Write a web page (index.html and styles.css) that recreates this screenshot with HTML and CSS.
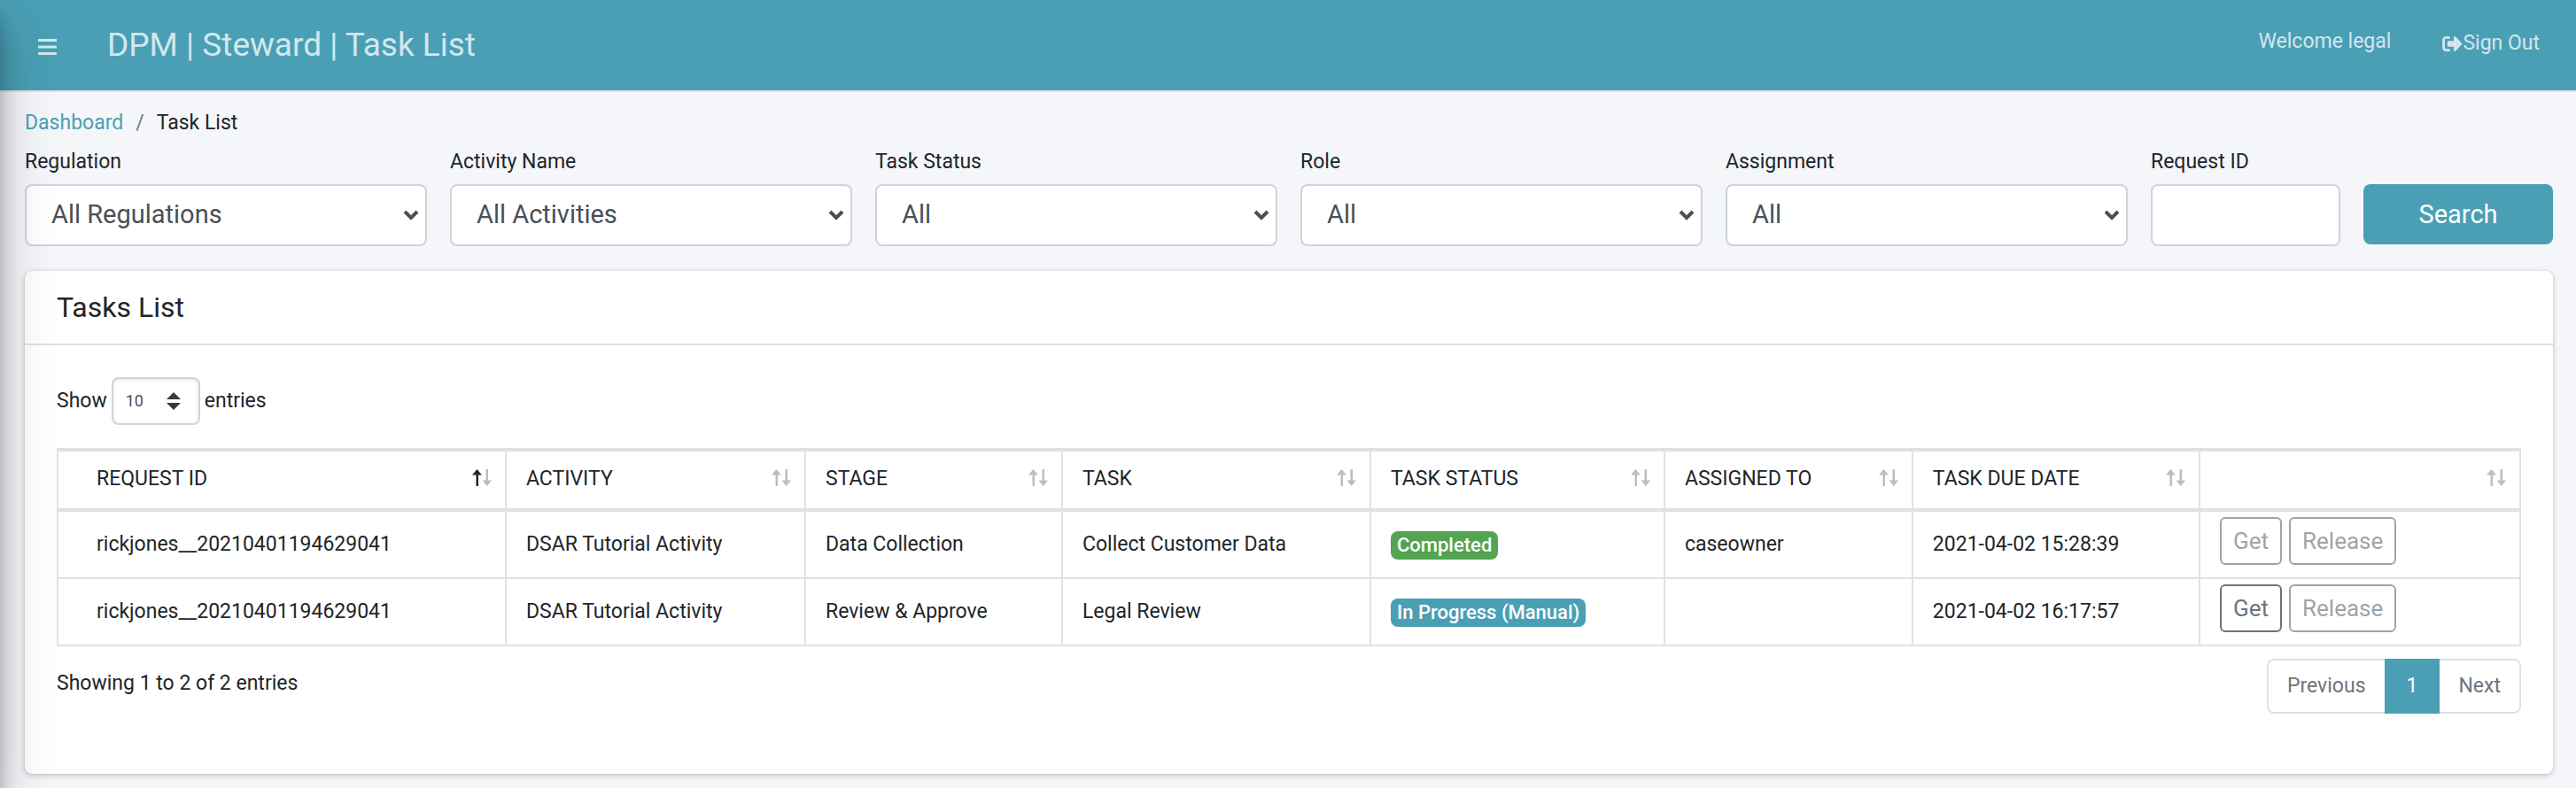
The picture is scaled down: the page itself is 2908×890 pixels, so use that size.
FILE: index.html
```html
<!DOCTYPE html>
<html lang="en">
<head>
<meta charset="utf-8">
<title>DPM | Steward | Task List</title>
<link rel="stylesheet" href="styles.css">
</head>
<body>
<svg class="defs" aria-hidden="true">
  <symbol id="sort" viewBox="0 0 22 20">
    <path class="up" d="M5.500 0L11 6.500H7V19H4.500V6.500H0Z"/>
    <path class="down" d="M15.500 0H18V12.500H22L16.750 19L11.500 12.500H15.500Z"/>
  </symbol>
</svg>
<aside class="sidebar" aria-hidden="true"></aside>
<header class="topbar">
  <button class="menu" type="button" aria-label="Toggle menu">
    <svg viewBox="0 0 21 18" width="21" height="18"><path d="M0 0H21V3H0ZM0 7.500H21V10.500H0ZM0 15H21V18H0Z"/></svg>
  </button>
  <h1 class="brand">DPM | Steward | Task List</h1>
  <span class="welcome">Welcome legal</span>
  <a class="signout" href="#"><svg viewBox="0 0 512 384" width="23" height="17"><path d="M497 209L329 377c-15 15-41 4.500-41-17v-96H152c-13.300 0-24-10.700-24-24v-96c0-13.300 10.700-24 24-24h136V24c0-21.400 25.900-32 41-17l168 168c9.300 9.400 9.300 24.600 0 34zM192 372v-40c0-6.600-5.400-12-12-12H96c-17.700 0-32-14.300-32-32V96c0-17.700 14.300-32 32-32h84c6.600 0 12-5.400 12-12V12c0-6.600-5.400-12-12-12H96C43 0 0 43 0 96v192c0 53 43 96 96 96h84c6.600 0 12-5.400 12-12z"/></svg>Sign Out</a>
</header>
<main class="content">
  <nav class="breadcrumb" aria-label="Breadcrumb">
    <a href="#">Dashboard</a><span class="slash">/</span><span>Task List</span>
  </nav>
  <form class="filters">
    <div class="field"><label for="regulation">Regulation</label><select id="regulation" class="control"><option>All Regulations</option></select></div>
    <div class="field"><label for="activity">Activity Name</label><select id="activity" class="control"><option>All Activities</option></select></div>
    <div class="field"><label for="status">Task Status</label><select id="status" class="control"><option>All</option></select></div>
    <div class="field"><label for="role">Role</label><select id="role" class="control"><option>All</option></select></div>
    <div class="field"><label for="assignment">Assignment</label><select id="assignment" class="control"><option>All</option></select></div>
    <div class="field narrow"><label for="request">Request ID</label><input id="request" class="control" type="text"></div>
    <button class="search" type="button">Search</button>
  </form>
  <section class="card">
    <h2 class="card-title">Tasks List</h2>
    <div class="card-body">
      <label class="length" for="length"><span>Show</span><select id="length"><option>10</option></select><span>entries</span></label>
      <table class="tasks">
        <colgroup>
          <col class="c-request"><col class="c-activity"><col class="c-stage"><col class="c-task"><col class="c-status"><col class="c-assigned"><col class="c-due"><col class="c-actions">
        </colgroup>
        <thead>
          <tr>
            <th><div class="head"><span>REQUEST ID</span><svg class="sort asc"><use href="#sort"/></svg></div></th>
            <th><div class="head"><span>ACTIVITY</span><svg class="sort"><use href="#sort"/></svg></div></th>
            <th><div class="head"><span>STAGE</span><svg class="sort"><use href="#sort"/></svg></div></th>
            <th><div class="head"><span>TASK</span><svg class="sort"><use href="#sort"/></svg></div></th>
            <th><div class="head"><span>TASK STATUS</span><svg class="sort"><use href="#sort"/></svg></div></th>
            <th><div class="head"><span>ASSIGNED TO</span><svg class="sort"><use href="#sort"/></svg></div></th>
            <th><div class="head"><span>TASK DUE DATE</span><svg class="sort"><use href="#sort"/></svg></div></th>
            <th><div class="head"><span></span><svg class="sort"><use href="#sort"/></svg></div></th>
          </tr>
        </thead>
        <tbody>
          <tr>
            <td>rickjones__20210401194629041</td><td>DSAR Tutorial Activity</td><td>Data Collection</td><td>Collect Customer Data</td>
            <td><span class="badge done">Completed</span></td><td>caseowner</td><td>2021-04-02 15:28:39</td>
            <td class="actions"><div class="buttons"><button type="button" disabled>Get</button><button type="button" disabled>Release</button></div></td>
          </tr>
          <tr>
            <td>rickjones__20210401194629041</td><td>DSAR Tutorial Activity</td><td>Review &amp; Approve</td><td>Legal Review</td>
            <td><span class="badge progress">In Progress (Manual)</span></td><td></td><td>2021-04-02 16:17:57</td>
            <td class="actions"><div class="buttons"><button type="button">Get</button><button type="button" disabled>Release</button></div></td>
          </tr>
        </tbody>
      </table>
      <div class="table-foot">
        <p class="info">Showing 1 to 2 of 2 entries</p>
        <nav class="pages" aria-label="Pages"><a href="#">Previous</a><a class="current" href="#" aria-current="page">1</a><a href="#">Next</a></nav>
      </div>
    </div>
  </section>
</main>
</body>
</html>
```

FILE: styles.css
```css
* { box-sizing: border-box; }

body {
  margin: 0;
  min-height: 100vh;
  background: #f4f6fa;
  color: #212529;
  font: 400 23px/34px Roboto, "Liberation Sans", sans-serif;
}

h1, h2, p { margin: 0; font-weight: 400; }
a { color: #4a9fb5; text-decoration: none; }
button, select, input { font: inherit; }
.defs { display: none; }

/* Collapsed off-canvas menu; only its shadow reaches the page. */
.sidebar {
  position: fixed;
  top: 0;
  bottom: 0;
  left: -500px;
  width: 500px;
  z-index: 5;
  box-shadow: 0 28px 56px rgba(0, 0, 0, .25), 0 20px 20px rgba(0, 0, 0, .22);
  pointer-events: none;
}

.topbar {
  display: flex;
  align-items: center;
  height: 104px;
  padding: 0 41px 0 43px;
  background: #4a9fb5;
  border-bottom: 2px solid #dee2e6;
  color: #d2e7ed;
}
.topbar svg { display: block; fill: currentColor; }
.menu { padding: 4px 0 0; border: 0; background: none; color: inherit; }
.brand { margin-left: 57px; font-size: 37px; line-height: 52px; }
.welcome { margin: 0 58px 8px auto; }
.signout { display: flex; align-items: center; margin-bottom: 4px; color: inherit; }

.content { padding: 18px 26px 16px 28px; }

.breadcrumb { display: flex; gap: 14px; margin-bottom: 10px; }
.slash { color: #6c757d; }

.filters {
  display: grid;
  grid-template-columns: repeat(12, 1fr);
  column-gap: 26px;
  margin-bottom: 28px;
}
.field { grid-column: span 2; display: flex; flex-direction: column; gap: 8px; min-width: 0; }
.narrow { grid-column: span 1; }
.control {
  width: 100%;
  height: 70px;
  padding: 0 28px 2px;
  border: 2px solid #ced4da;
  border-radius: 8px;
  background: #fff;
  color: #495057;
  font-size: 29px;
}
select.control {
  appearance: none;
  background: #fff url("data:image/svg+xml,%3Csvg xmlns='http://www.w3.org/2000/svg' viewBox='0 0 18 12'%3E%3Cpath d='M2 2l7 7 7-7' fill='none' stroke='%23495057' stroke-width='4'/%3E%3C/svg%3E") no-repeat right 7px center / 18px 12px;
}
.search {
  align-self: end;
  height: 68px;
  margin-bottom: 2px;
  border: 0;
  border-radius: 8px;
  background: #4a9fb5;
  color: #fff;
  font-size: 29px;
}

.card {
  border-radius: 8px;
  background: #fff;
  box-shadow: 0 0 2px rgba(0, 0, 0, .13), 0 2px 6px rgba(0, 0, 0, .2);
}
.card-title {
  padding: 24px 36px;
  border-bottom: 2px solid #dfdfdf;
  font-size: 32px;
  line-height: 34px;
}
.card-body { padding: 36px; }

.length { display: inline-flex; align-items: center; gap: 5px; margin-bottom: 26px; vertical-align: top; }
.length select {
  appearance: none;
  width: 100px;
  height: 54px;
  padding: 0 14px;
  border: 2px solid #ced4da;
  border-radius: 8px;
  background: #fff url("data:image/svg+xml,%3Csvg xmlns='http://www.w3.org/2000/svg' viewBox='0 0 4 5'%3E%3Cpath fill='%23343a40' d='M2 0L0 2h4zm0 5L0 3h4z'/%3E%3C/svg%3E") no-repeat right 20px center / 16px 20px;
  box-shadow: inset 0 2px 4px rgba(0, 0, 0, .08);
  color: #495057;
  font-size: 18px;
}

.tasks { width: 100%; border-collapse: collapse; table-layout: fixed; }
.c-request { width: 18.2%; }
.c-activity { width: 12.16%; }
.c-stage { width: 10.43%; }
.c-task { width: 12.52%; }
.c-status { width: 11.94%; }
.c-assigned { width: 10.07%; }
.c-due { width: 11.66%; }
.c-actions { width: 13.02%; }

.tasks th, .tasks td { border: 2px solid #dee2e6; text-align: left; font-weight: 400; white-space: nowrap; }
.tasks th { padding: 14px 15px 16px 22px; border-top-width: 4px; border-bottom-width: 4px; }
.tasks td { padding: 6px 22px; }
.tasks th:first-child, .tasks td:first-child { padding-left: 43px; }
.tasks .actions { padding: 6px 22px 14px; }

.head { display: flex; align-items: center; justify-content: space-between; }
.sort { width: 22px; height: 20px; margin-bottom: 2px; }
.up { fill: var(--up, #bcbdbe); }
.down { fill: #bcbdbe; }
.asc { --up: #212529; }

.badge {
  display: inline-block;
  padding: 0 7px;
  border-radius: 8px;
  color: #fff;
  font-size: 22px;
  font-weight: 500;
  line-height: 32px;
  vertical-align: middle;
}
.done { background: #53a451; }
.progress { background: #4a9fb5; }

.buttons { display: flex; gap: 8px; }
.buttons button {
  height: 54px;
  padding: 0 13px;
  border: 2px solid #6c757d;
  border-radius: 6px;
  background: none;
  color: #6c757d;
  font-size: 26px;
}
.buttons button:disabled { opacity: .65; }

.table-foot { display: flex; align-items: flex-start; justify-content: space-between; margin: 14px 0 32px; }
.info { padding-top: 11px; }
.pages { display: flex; border: 2px solid #dee2e6; border-radius: 8px; }
.pages a { padding: 12px 21px; color: #6c757d; }
.pages .current { margin: -2px 0; padding: 14px 25px; background: #4a9fb5; color: #fff; }
```
